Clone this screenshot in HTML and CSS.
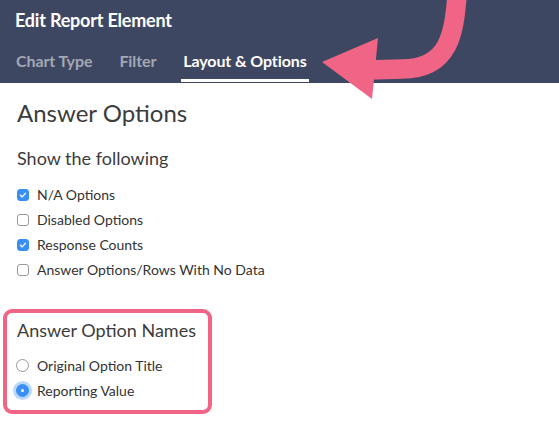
FILE: index.html
```html
<!DOCTYPE html>
<html>
<head>
<meta charset="utf-8">
<link rel="stylesheet" href="styles.css">
</head>
<body>
<div class="page">
  <header class="header">
    <div class="title">Edit Report Element</div>
    <nav class="tabs">
      <span class="tab">Chart Type</span>
      <span class="tab">Filter</span>
      <span class="tab active">Layout &amp; Options</span>
    </nav>
  </header>
  <main class="content">
    <h1 class="h1">Answer Options</h1>
    <h2 class="h2">Show the following</h2>
    <ul class="list">
      <li class="row"><span class="cb on"><svg viewBox="0 0 12 12" width="12" height="12"><path d="M3 6.2 L5.1 8.3 L9 3.8" fill="none" stroke="#fff" stroke-width="1.6" stroke-linecap="round" stroke-linejoin="round"/></svg></span>N/A Options</li>
      <li class="row"><span class="cb"></span>Disabled Options</li>
      <li class="row"><span class="cb on"><svg viewBox="0 0 12 12" width="12" height="12"><path d="M3 6.2 L5.1 8.3 L9 3.8" fill="none" stroke="#fff" stroke-width="1.6" stroke-linecap="round" stroke-linejoin="round"/></svg></span>Response Counts</li>
      <li class="row"><span class="cb"></span>Answer Options/Rows With No Data</li>
    </ul>
    <section class="box">
      <h2 class="h2 boxtitle">Answer Option Names</h2>
      <div class="row"><span class="rb"></span>Original Option Title</div>
      <div class="row"><span class="rb on"></span>Reporting Value</div>
    </section>
  </main>
  <svg class="arrow" width="559" height="110" viewBox="0 0 559 110">
    <path d="M457,-4 C454,32 450,69 402,69 L368,70" fill="none" stroke="#f06585" stroke-width="19.5"/>
    <polygon points="378,38 322,62 372,99" fill="#f06585"/>
  </svg>
</div>
</body>
</html>
```
FILE: styles.css
```css
* { box-sizing: border-box; }
body {
  margin: 0;
  font-family: Lato, "Open Sans", sans-serif;
  background: #fff;
  color: #3a3a3a;
}
.page { position: relative; width: 559px; height: 424px; overflow: hidden; }
.header {
  background: #3e4762;
  height: 83px;
  padding: 10px 0 0 15px;
}
.title {
  color: #fff;
  font-weight: 700;
  font-size: 18px;
  line-height: 20px;
  letter-spacing: -0.2px;
}
.tabs {
  display: flex;
  margin-top: 22px;
}
.tab {
  color: #a3a7b4;
  font-weight: 700;
  font-size: 16px;
  line-height: 18px;
  padding: 0 0 9px 0;
  margin-right: 27px;
  letter-spacing: -0.1px;
}
.tab:first-child { margin-left: 1px; }
.tab.active {
  color: #fff;
  border-bottom: 3px solid #fff;
  padding: 0 2px 9px 2px;
  margin-left: -2px;
}
.content { padding: 16px 0 0 17px; }
.h1 {
  margin: 0;
  font-weight: 400;
  font-size: 24px;
  line-height: 28px;
  color: #3c3c3c;
}
.h2 {
  margin: 20px 0 0;
  font-weight: 400;
  font-size: 18px;
  line-height: 22px;
  color: #3c3c3c;
}
.list { list-style: none; margin: 13px 0 0; padding: 0; }
.row {
  display: flex;
  align-items: center;
  height: 25px;
  font-size: 14px;
  color: #333;
}
.cb {
  width: 12px; height: 12px;
  border: 1px solid #9a9a9a;
  border-radius: 3px;
  margin-right: 8px;
  display: inline-flex;
  align-items: center;
  justify-content: center;
  background: #fff;
}
.cb.on { background: #3a8ff5; border-color: #3a8ff5; }
.cb svg { display: block; }
.box {
  margin: 27px 0 0 -14px;
  width: 209px;
  height: 105px;
  border: 4px solid #f06585;
  border-radius: 9px;
  padding: 6px 0 0 10px;
}
.boxtitle { margin: 0 0 12px; }
.box .row { margin-left: -1px; }
.rb {
  width: 13px; height: 13px;
  border: 1px solid #9a9a9a;
  border-radius: 50%;
  margin-right: 8px;
  background: #fff;
}
.rb.on {
  background: #3a8ff5;
  border-color: #3a8ff5;
  box-shadow: 0 0 0 3px rgba(58,143,245,0.35);
  position: relative;
}
.rb.on::after {
  content: "";
  position: absolute;
  left: 4px; top: 4px;
  width: 3px; height: 3px;
  border-radius: 50%;
  background: #fff;
}
.arrow { position: absolute; left: 0; top: 0; }
```
